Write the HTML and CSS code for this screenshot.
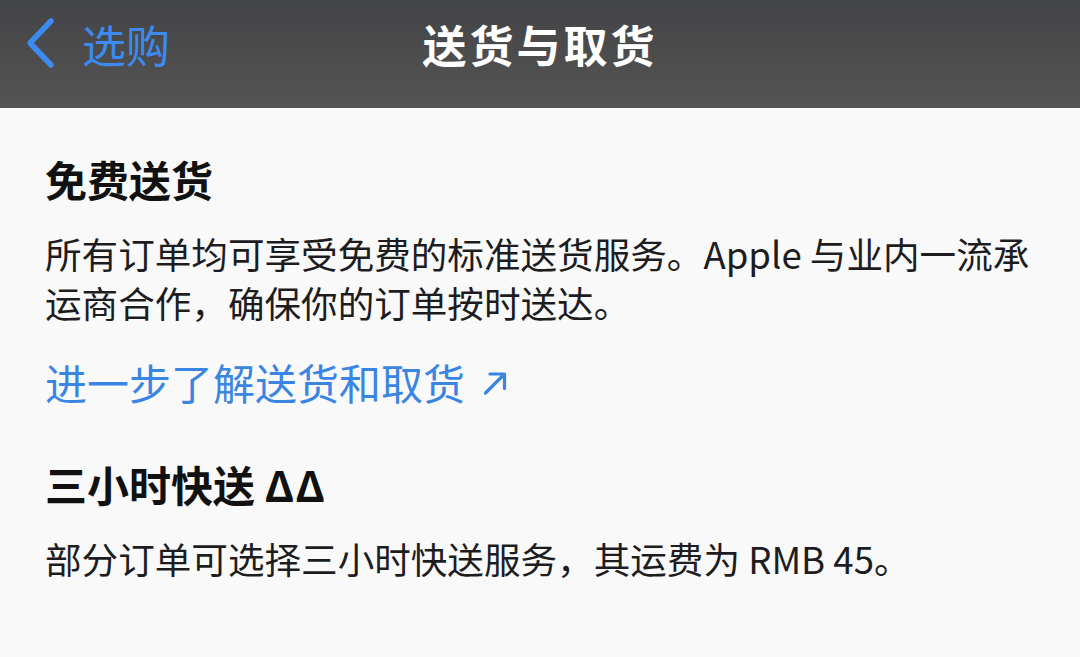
FILE: index.html
```html
<!DOCTYPE html>
<html lang="zh-CN">
<head>
<meta charset="utf-8">
<title>送货与取货</title>
<link rel="stylesheet" href="styles.css">
</head>
<body>
<header class="navbar">
  <a class="back" href="#">
    <svg class="chevron" width="32" height="54" viewBox="0 0 32 54" aria-hidden="true">
      <path d="M27 4 L6 26 L27 48" fill="none" stroke="currentColor" stroke-width="5.5" stroke-linecap="round" stroke-linejoin="round"/>
    </svg>
    <span class="back-label">选购</span>
  </a>
  <h1 class="title">送货与取货</h1>
  <div class="spacer"></div>
</header>
<main class="content">
  <section class="block">
    <h2 class="heading">免费送货</h2>
    <p class="text">所有订单均可享受免费的标准送货服务。Apple 与业内一流承运商合作，确保你的订单按时送达。</p>
    <a class="more" href="#">进一步了解送货和取货<svg class="arrow" width="26" height="26" viewBox="0 0 26 26" aria-hidden="true"><path d="M3.5 23 L22 4.5 M8 4 H22.5 V18.5" fill="none" stroke="currentColor" stroke-width="3.2" stroke-linecap="round" stroke-linejoin="round"/></svg></a>
  </section>
  <section class="block second">
    <h2 class="heading">三小时快送 <span class="delta">ΔΔ</span></h2>
    <p class="text">部分订单可选择三小时快送服务，其运费为 RMB 45。</p>
  </section>
</main>
</body>
</html>
```

FILE: styles.css
```css
* {
  box-sizing: border-box;
}

html, body {
  margin: 0;
  padding: 0;
}

body {
  width: 1080px;
  height: 657px;
  overflow: hidden;
  background: #f9f9f9;
  font-family: "Noto Sans CJK SC", "Noto Sans", sans-serif;
  color: #1b1b1d;
}

.navbar {
  height: 108px;
  display: grid;
  grid-template-columns: 1fr auto 1fr;
  align-items: center;
  background: linear-gradient(180deg, #434446 0%, #4d4d4e 55%, #545454 100%);
  padding-bottom: 20px;
}

.back {
  display: flex;
  align-items: center;
  padding-left: 24px;
  color: #3b8bf2;
  text-decoration: none;
}

.chevron {
  display: block;
}

.back-label {
  margin-left: 26px;
  font-size: 44px;
  line-height: 52px;
  font-weight: 400;
}

.title {
  margin: 0;
  color: #ffffff;
  font-size: 44px;
  line-height: 52px;
  font-weight: 700;
  letter-spacing: 3px;
}

.content {
  padding: 47px 50px 0 45px;
}

.block {
  display: flex;
  flex-direction: column;
  align-items: flex-start;
}

.second {
  margin-top: 54px;
}

.heading {
  margin: 0;
  font-size: 42px;
  line-height: 48px;
  font-weight: 700;
  color: #111;
}

.delta {
  letter-spacing: 1px;
}

.text {
  margin: 26px 0 0;
  font-size: 36.6px;
  line-height: 49px;
  font-weight: 400;
  color: #1d1d1f;
}

.more {
  margin-top: 31px;
  display: flex;
  align-items: center;
  font-size: 42px;
  line-height: 48px;
  color: #3a85e2;
  text-decoration: none;
}

.arrow {
  margin-left: 17px;
  margin-top: 2px;
}
```
